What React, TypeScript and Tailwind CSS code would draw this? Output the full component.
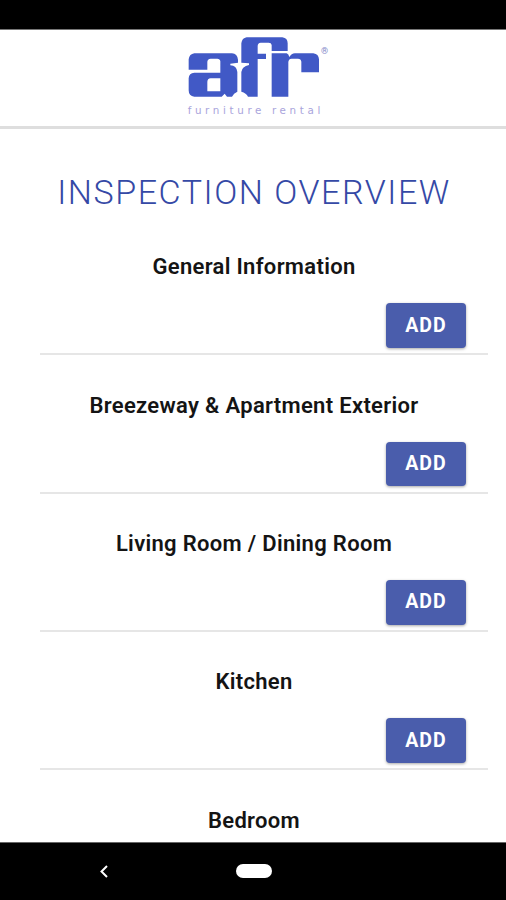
import React from 'react';

const SECTIONS = [
  { title: 'General Information', hasAdd: true },
  { title: 'Breezeway & Apartment Exterior', hasAdd: true },
  { title: 'Living Room / Dining Room', hasAdd: true },
  { title: 'Kitchen', hasAdd: true },
  { title: 'Bedroom', hasAdd: false },
];

const Logo: React.FC = () => (
  <svg className="w-[160px] h-[96px] shrink-0" viewBox="0 17 480 288" role="img" aria-label="afr furniture rental">
    {/* a */}
    <path
      fill="#4159c6"
      fillRule="evenodd"
      d="M55 87H168Q184 88 186 106V115L163 118V123Q182 124 184 143V202Q173 206 168 217H153L146 208L137 217H55Q38 215 38 198V162Q39 146 55 145H133V111Q132 103 124 103H104Q94 104 94 113V136H38V105Q40 89 55 87ZM104 162Q94 163 94 173V201H133V162Z"
    />
    {/* f */}
    <path
      fill="#4159c6"
      d="M212 39H319Q335 41 335 57V80H287V62Q286 55 278 55H254Q245 56 245 65V88H270V104H245V217H216Q211 206 196 202V143Q198 126 219 122V117L196 115V57Q198 41 212 39Z"
    />
    {/* r */}
    <path
      fill="#4159c6"
      d="M287 87H332Q338 89 340 98Q346 88 357 87H412Q428 89 429 105V144H376V112Q375 103 366 103H347Q337 104 337 114V217H287Z"
    />
    <text x="435" y="89" fontSize="27" fill="#8088c8" className="font-['Roboto',sans-serif]">®</text>
    <text
      x="35"
      y="270"
      fontSize="31"
      fill="#a9a4dc"
      textLength="398"
      className="font-['DejaVu_Sans',sans-serif]"
    >
      furniture rental
    </text>
  </svg>
);

const Section: React.FC<{ title: string; hasAdd: boolean }> = ({ title, hasAdd }) => (
  <section className="h-[138.35px] shrink-0 flex flex-col border-b-2 border-[#e6e6e6] pt-[35.4px]">
    <h2 className="text-center text-[22px] leading-[30px] font-semibold tracking-[0.32px] text-[#141414] pr-5">{title}</h2>
    {hasAdd && (
      <div className="flex justify-end pr-[22px] pt-[21px]">
        <button className="w-20 h-[44.5px] pb-px rounded-[4px] bg-[#4a5dac] text-white text-[19.5px] font-bold tracking-[1px] shadow-[0_1px_3px_rgba(0,0,0,0.35)]">
          ADD
        </button>
      </div>
    )}
  </section>
);

const App: React.FC = () => {
  return (
    <div className="w-[506px] h-[900px] flex flex-col overflow-hidden bg-white font-['Roboto',sans-serif]">
      <div className="h-[30px] shrink-0 bg-black border-b border-[#777777]" />
      <header className="h-[99px] shrink-0 flex justify-center pl-[6px] border-b-3 border-[#dedede]">
        <Logo />
      </header>

      <main className="flex-1 min-h-0 overflow-hidden flex flex-col">
        <h1 className="h-[88px] shrink-0 pt-[42px] pl-[2px] text-center text-[34px] leading-[42px] font-light tracking-[1.55px] text-[#3549a6] whitespace-nowrap">
          INSPECTION OVERVIEW
        </h1>
        <div className="flex flex-col pl-10 pr-[18px]">
          {SECTIONS.map(({ title, hasAdd }) => (
            <Section key={title} title={title} hasAdd={hasAdd} />
          ))}
        </div>
      </main>

      <nav className="h-[58px] shrink-0 bg-black border-t border-[#666666] grid grid-cols-[207px_93px_1fr] items-center pb-px">
        <svg className="w-2 h-[13px] ml-[100px]" viewBox="0 0 8 13" fill="none" stroke="#ffffff" strokeWidth="2">
          <path d="M7 1L1.5 6.5L7 12" />
        </svg>
        <div className="w-9 h-[14px] ml-[29px] rounded-full bg-white" />
      </nav>
    </div>
  );
};

export default App;
